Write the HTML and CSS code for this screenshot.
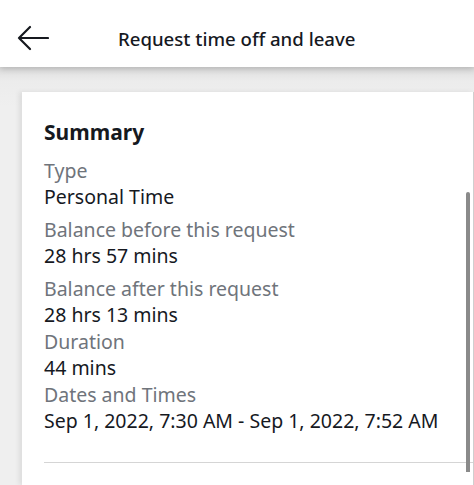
FILE: index.html
```html
<!DOCTYPE html>
<html>

<head>
    <title>Request time off and leave</title>
    <link rel="stylesheet" href="styles.css">
</head>

<body>

    <div class="header">
        <svg class="back" width="32" height="26" viewBox="0 0 32 26">
            <path d="M31 13H2M13 2L2 13l11 11" fill="none" stroke="#16191f" stroke-width="2.2" stroke-linecap="round" stroke-linejoin="round"/>
        </svg>
        <h1 class="title">Request time off and leave</h1>
    </div>

    <div class="page">
        <div class="card">
            <h2 class="card-title">Summary</h2>

            <div class="field spaced">
                <div class="label">Type</div>
                <div class="value">Personal Time</div>
            </div>
            <div class="field spaced">
                <div class="label">Balance before this request</div>
                <div class="value">28 hrs 57 mins</div>
            </div>
            <div class="field">
                <div class="label">Balance after this request</div>
                <div class="value">28 hrs 13 mins</div>
            </div>
            <div class="field">
                <div class="label">Duration</div>
                <div class="value">44 mins</div>
            </div>
            <div class="field">
                <div class="label">Dates and Times</div>
                <div class="value">Sep 1, 2022, 7:30 AM - Sep 1, 2022, 7:52 AM</div>
            </div>

            <hr class="divider">
        </div>
        <div class="scrollbar"></div>
    </div>

</body>

</html>
```

FILE: styles.css
```css
body {
    margin: 0;
    font-family: "Noto Sans", "Open Sans", sans-serif;
    color: #16191f;
    background-color: #efefef;
    height: 485px;
    overflow: hidden;
}

.header {
    height: 58px;
    padding-top: 9px;
    background-color: white;
    display: flex;
    align-items: center;
    position: relative;
    z-index: 1;
    box-shadow: 0 2px 6px rgba(0, 0, 0, 0.18);
}

.back {
    margin-left: 17px;
}

.title {
    margin: 0 0 0 69px;
    font-size: 18.6px;
    font-weight: 500;
}

.page {
    position: relative;
    padding: 25px 0 0 22px;
    background: linear-gradient(#dcdcdc, #ececec 14px, #efefef 40px);
    height: 393px;
}

.card {
    background-color: white;
    padding: 20px 0 0 22px;
    height: 373px;
    border-right: 1px solid #cfcfcf;
    box-shadow: -3px 0 5px rgba(0, 0, 0, 0.08);
}

.card-title {
    margin: 0 0 6px;
    font-size: 21px;
    font-weight: 700;
    line-height: 40px;
}

.field {
    font-size: 19.5px;
    line-height: 26px;
    margin-bottom: 1px;
}

.field.spaced {
    margin-bottom: 7px;
}

.label {
    color: #6f747b;
}

.value {
    color: #16191f;
}

.divider {
    margin: 28px 0 0;
    border: none;
    border-top: 1px solid #d5d5d5;
}

.scrollbar {
    position: absolute;
    left: 466px;
    top: 125px;
    width: 4px;
    height: 280px;
    border-radius: 2px 2px 0 0;
    background-color: #8a8a8a;
}
```
